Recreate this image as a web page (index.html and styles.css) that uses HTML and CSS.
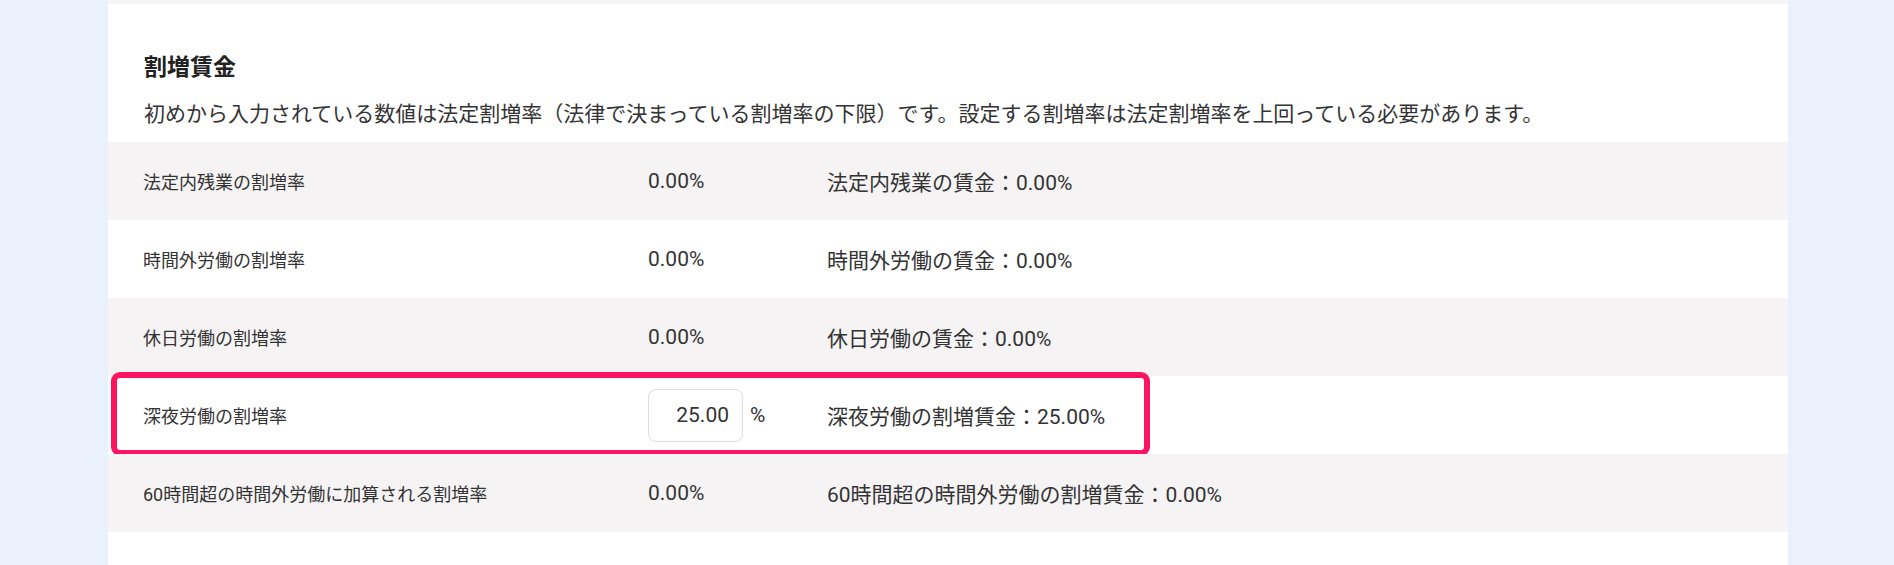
FILE: index.html
```html
<!DOCTYPE html>
<html lang="ja">
  <head>
    <meta charset="UTF-8" />
    <title>割増賃金</title>
    <link rel="stylesheet" href="styles.css">
  </head>

  <body>
    <section id="premium">
      <header class="premium__head">
        <h2 class="premium__title">割増賃金</h2>
        <p class="premium__desc">初めから入力されている数値は法定割増率（法律で決まっている割増率の下限）です。設定する割増率は法定割増率を上回っている必要があります。</p>
      </header>

      <ul class="premium__rows">
        <li class="premium__row">
          <span class="row__label">法定内残業の割増率</span>
          <span class="row__value">0.00%</span>
          <span class="row__wage">法定内残業の賃金：0.00%</span>
        </li>
        <li class="premium__row">
          <span class="row__label">時間外労働の割増率</span>
          <span class="row__value">0.00%</span>
          <span class="row__wage">時間外労働の賃金：0.00%</span>
        </li>
        <li class="premium__row">
          <span class="row__label">休日労働の割増率</span>
          <span class="row__value">0.00%</span>
          <span class="row__wage">休日労働の賃金：0.00%</span>
        </li>
        <li class="premium__row premium__row--marked">
          <span class="row__label">深夜労働の割増率</span>
          <span class="row__value">
            <input class="row__input" type="text" value="25.00" />
            <span class="row__unit">%</span>
          </span>
          <span class="row__wage">深夜労働の割増賃金：25.00%</span>
        </li>
        <li class="premium__row">
          <span class="row__label">60時間超の時間外労働に加算される割増率</span>
          <span class="row__value">0.00%</span>
          <span class="row__wage">60時間超の時間外労働の割増賃金：0.00%</span>
        </li>
      </ul>
    </section>
  </body>
</html>
```

FILE: styles.css
```css
body {
  margin: 0;
  height: 565px;
  overflow: hidden;
  background-color: #eaf1fc;
  font-family: Roboto, "Noto Sans CJK JP", sans-serif;
  color: #333;
}

#premium {
  width: 1680px;
  height: 565px;
  margin-left: 108px;
  background-color: #fff;
  border-top: 4px solid #f5f3f4;
  box-sizing: border-box;
}

.premium__head {
  padding: 48px 36px 13px;
}

.premium__title {
  margin: 0;
  font-size: 23px;
  line-height: 32px;
  font-weight: 700;
  color: #222;
}

.premium__desc {
  margin: 15px 0 0;
  font-size: 21px;
  line-height: 30px;
  color: #333;
}

.premium__rows {
  list-style: none;
  margin: 0;
  padding: 0;
}

.premium__row {
  position: relative;
  display: grid;
  grid-template-columns: 505px 179px 1fr;
  align-items: center;
  height: 78px;
  padding-left: 35px;
}

.premium__row:nth-child(odd) {
  background-color: #f5f3f4;
}

.premium__row--marked::after {
  position: absolute;
  content: "";
  left: 3px;
  top: -4px;
  width: 1039px;
  height: 84px;
  border: 6px solid #ff1462;
  border-radius: 9px;
  box-sizing: border-box;
  pointer-events: none;
}

.row__label {
  font-size: 18px;
}

.row__value,
.row__wage {
  font-size: 21px;
}

.row__value {
  display: flex;
  align-items: center;
}

.row__input {
  width: 95px;
  height: 53px;
  box-sizing: border-box;
  padding: 0 13px 0 0;
  border: 1px solid #ddd;
  border-radius: 8px;
  text-align: right;
  font-family: inherit;
  font-size: 21px;
  color: #333;
  background: #fff;
}

.row__unit {
  margin-left: 7px;
}
```
